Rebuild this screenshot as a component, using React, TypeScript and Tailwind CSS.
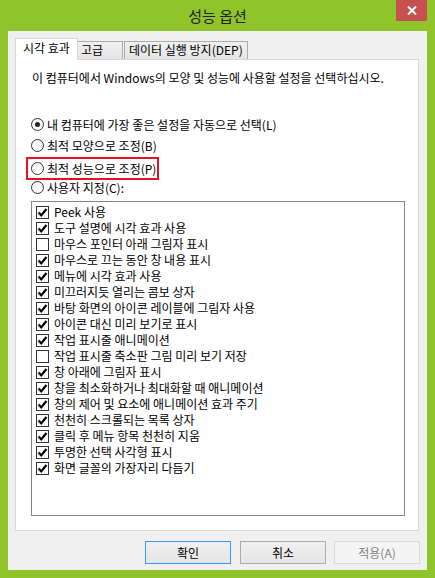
import { useState } from "react";

const font = "font-['Noto_Sans_CJK_KR','Noto_Sans',sans-serif]";

const effects: [string, boolean][] = [
  ["Peek 사용", true],
  ["도구 설명에 시각 효과 사용", true],
  ["마우스 포인터 아래 그림자 표시", false],
  ["마우스로 끄는 동안 창 내용 표시", true],
  ["메뉴에 시각 효과 사용", true],
  ["미끄러지듯 열리는 콤보 상자", true],
  ["바탕 화면의 아이콘 레이블에 그림자 사용", true],
  ["아이콘 대신 미리 보기로 표시", true],
  ["작업 표시줄 애니메이션", true],
  ["작업 표시줄 축소판 그림 미리 보기 저장", false],
  ["창 아래에 그림자 표시", true],
  ["창을 최소화하거나 최대화할 때 애니메이션", true],
  ["창의 제어 및 요소에 애니메이션 효과 주기", true],
  ["천천히 스크롤되는 목록 상자", true],
  ["클릭 후 메뉴 항목 천천히 지움", true],
  ["투명한 선택 사각형 표시", true],
  ["화면 글꼴의 가장자리 다듬기", true],
];

const radios = [
  "내 컴퓨터에 가장 좋은 설정을 자동으로 선택(L)",
  "최적 모양으로 조정(B)",
  "최적 성능으로 조정(P)",
  "사용자 지정(C):",
];

const Radio = ({ checked }: { checked: boolean }) => (
  <span className="w-[13px] h-[13px] rounded-full border border-[#333] bg-gradient-to-b from-[#f6f6f6] to-white flex items-center justify-center shrink-0">
    {checked && <span className="w-[5px] h-[5px] rounded-full bg-[#222]" />}
  </span>
);

const Check = ({ checked }: { checked: boolean }) => (
  <span className="w-[13px] h-[13px] border border-[#333] bg-white flex items-center justify-center shrink-0">
    {checked && (
      <svg width="11" height="11" viewBox="0 0 11 11">
        <path
          d="M1.5 5.5 L4.2 8.3 L9.5 2"
          fill="none"
          stroke="#000"
          strokeWidth="2.2"
        />
      </svg>
    )}
  </span>
);

const App = () => {
  const [choice] = useState(0);

  return (
    <div
      className={`w-[435px] h-[578px] bg-[#8fc52b] flex flex-col text-black ${font}`}
    >
      {/* title bar */}
      <div className="relative h-[31px] flex items-center justify-center">
        <span className="text-[15px] text-[#222] leading-none">성능 옵션</span>
        <button className="absolute right-[8px] top-0 w-[31px] h-[21px] bg-[#c75050] flex items-center justify-center">
          <svg width="10" height="9" viewBox="0 0 10 9">
            <path d="M1 0.5 L9 8.5 M9 0.5 L1 8.5" stroke="#fff" strokeWidth="2" />
          </svg>
        </button>
      </div>

      {/* client area */}
      <div className="mx-[8px] h-[539px] bg-[#f0f0f0] flex flex-col pl-[7px] pt-[7px]">
        <div className="relative z-10 flex items-end h-[22px] text-[12px]">
          <div className="w-[63px] h-[22px] bg-white border-t border-l border-r border-[#d9d9d9] pl-[7px] pt-[1px] leading-[16px]">
            시각 효과
          </div>
          <div className="w-[45px] h-[18px] mb-[1px] border-t border-r border-[#acacac] bg-gradient-to-b from-[#f0f0f0] to-[#e5e5e5] pl-[3px] leading-[16px]">
            고급
          </div>
          <div className="ml-[1px] w-[124px] h-[18px] mb-[1px] border-t border-l border-r border-[#acacac] bg-gradient-to-b from-[#f0f0f0] to-[#e5e5e5] pl-[4px] leading-[16px]">
            데이터 실행 방지(DEP)
          </div>
        </div>

        {/* tab panel */}
        <div className="-mt-px w-[404px] h-[472px] bg-white border border-[#d9d9d9] flex flex-col pl-[15px] pt-[10px] text-[12px]">
          <p className="leading-[16px] pl-[1px]">
            이 컴퓨터에서 Windows의 모양 및 성능에 사용할 설정을 선택하십시오.
          </p>

          <div className="mt-[28px] flex flex-col">
            {radios.map((label, i) =>
              i === 2 ? (
                <div key={label} className="h-[21px]">
                  <div className="-ml-[5px] mt-[1px] h-[23px] w-fit border-2 border-[#e81123] pl-[3px] pr-[1px] flex items-center gap-[3px]">
                    <Radio checked={choice === i} />
                    <span className="leading-[16px]">{label}</span>
                  </div>
                </div>
              ) : (
                <div key={label} className="h-[21px] flex items-center gap-[3px]">
                  <Radio checked={choice === i} />
                  <span className="leading-[16px]">{label}</span>
                </div>
              )
            )}
          </div>

          <div className="mt-[3px] w-[374px] h-[315px] border border-[#828790] bg-white pt-[2px] pl-[4px] flex flex-col">
            {effects.map(([label, on]) => (
              <div key={label} className="h-[16px] flex items-center gap-[5px]">
                <Check checked={on} />
                <span className="leading-[16px]">{label}</span>
              </div>
            ))}
          </div>
        </div>

        {/* buttons */}
        <div className="mt-[10px] flex justify-end pr-[7px] text-[12px]">
          <button className="w-[86px] h-[23px] border border-[#3399ff] bg-gradient-to-b from-[#f0f0f0] to-[#e5e5e5]">
            확인
          </button>
          <button className="ml-[9px] w-[86px] h-[23px] border border-[#acacac] bg-gradient-to-b from-[#f0f0f0] to-[#e5e5e5]">
            취소
          </button>
          <button className="ml-[8px] w-[86px] h-[23px] border border-[#d9d9d9] bg-[#f4f4f4] text-[#838383]">
            적용(A)
          </button>
        </div>
      </div>
    </div>
  );
};

export default App;
